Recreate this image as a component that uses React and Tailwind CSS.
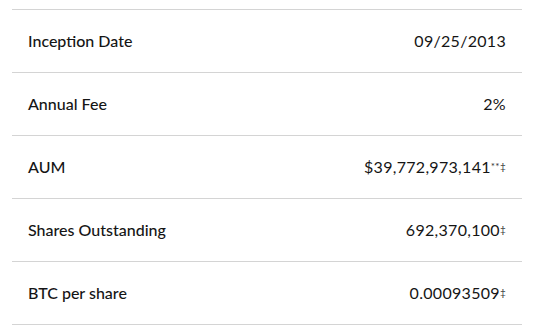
import React from 'react'

const rows = [
    { label: 'Inception Date', value: '09/25/2013', mark: '' },
    { label: 'Annual Fee', value: '2%', mark: '' },
    { label: 'AUM', value: '$39,772,973,141', mark: '**‡' },
    { label: 'Shares Outstanding', value: '692,370,100', mark: '‡' },
    { label: 'BTC per share', value: '0.00093509', mark: '‡' },
]

export default function App() {
    return (
        <div className="w-[536px] h-[335px] bg-white pt-[9px]" style={{ fontFamily: 'Lato, "Open Sans", sans-serif' }}>
            <div className="w-[510px] ml-3 border-b border-[#d4d4d4]">
                {rows.map((row) => (
                    <div key={row.label} className="h-[63px] border-t border-[#d4d4d4] flex items-center justify-between px-4 text-[16px] text-[#151515]">
                        <span className="font-medium">{row.label}</span>
                        <span className="tracking-[0.3px]">
                            {row.value}
                            {row.mark && <sup className="text-[10px] text-[#333] -top-[0.35em]">{row.mark}</sup>}
                        </span>
                    </div>
                ))}
            </div>
        </div>
    )
}
